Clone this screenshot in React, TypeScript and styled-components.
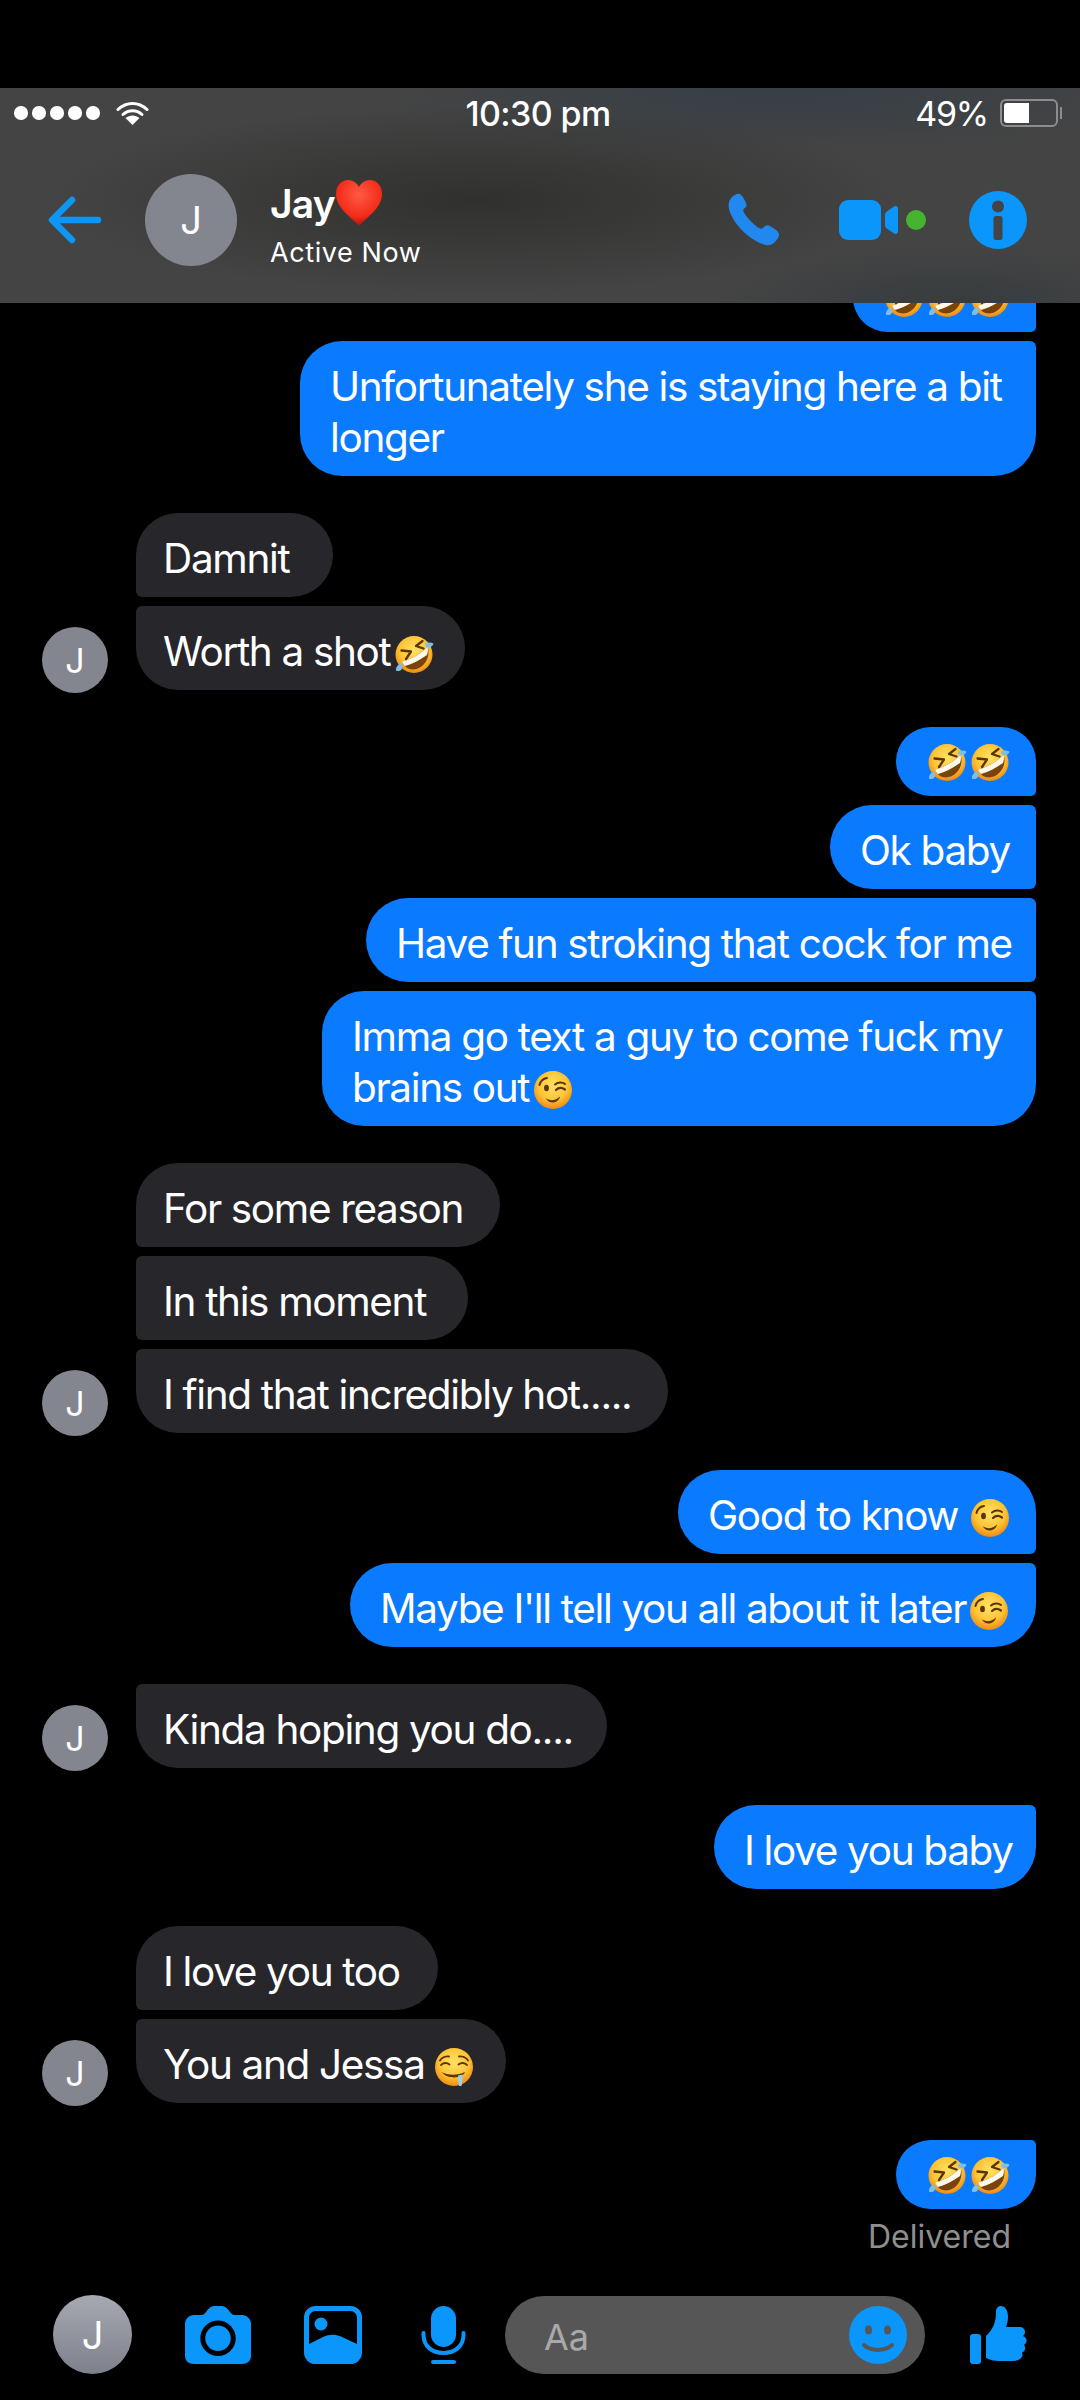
import React from "react";
import styled, {createGlobalStyle, css} from "styled-components";

const GlobalStyle = createGlobalStyle`
  html, body {
    margin: 0;
    padding: 0;
    background: #000;
  }
  body {
    font-family: Inter, "Liberation Sans", sans-serif;
    -webkit-font-smoothing: antialiased;
  }
`;

type Corner = "first" | "middle" | "last";

const Screen = styled.div`
  width: 1080px;
  height: 2400px;
  padding-top: 88px;
  box-sizing: border-box;
  display: flex;
  flex-direction: column;
  background: #000;
  color: #fff;
  overflow: hidden;
`;

const Header = styled.header`
  flex: 0 0 215px;
  display: flex;
  flex-direction: column;
  background:
    radial-gradient(ellipse 430px 95px at 44% 52%, rgba(46, 46, 44, 0.9), rgba(46, 46, 44, 0) 100%),
    radial-gradient(ellipse 420px 70px at 72% 0%, rgba(52, 62, 72, 0.85), rgba(52, 62, 72, 0) 100%),
    radial-gradient(ellipse 240px 60px at 88% 100%, rgba(52, 58, 62, 0.8), rgba(52, 58, 62, 0) 100%),
    #444;
`;

const StatusBar = styled.div`
  height: 50px;
  padding: 0 22px 0 14px;
  display: grid;
  grid-template-columns: 1fr auto 1fr;
  align-items: center;
  font-size: 34px;
  letter-spacing: -0.6px;
`;

const Signal = styled.div`
  display: flex;
  align-items: center;
  gap: 4.5px;
`;

const Dot = styled.span`
  width: 13.5px;
  height: 13.5px;
  border-radius: 50%;
  background: #fff;
`;

const WifiIcon = styled.svg`
  width: 33px;
  height: 24px;
  margin-left: 12px;
`;

const Clock = styled.div`
  font-weight: 500;
  padding-left: 4px;
`;

const Battery = styled.div`
  justify-self: end;
  display: flex;
  align-items: center;
  gap: 12px;
  font-weight: 400;
  letter-spacing: -1.2px;
`;

const BatteryShell = styled.div`
  position: relative;
  width: 58px;
  height: 28px;
  padding: 2px;
  box-sizing: border-box;
  border: 2px solid #8d8d8d;
  border-radius: 6px;
  &::after {
    content: "";
    position: absolute;
    top: 6px;
    right: -6px;
    width: 2px;
    height: 12px;
    background: #8d8d8d;
  }
`;

const BatteryFill = styled.div`
  height: 100%;
  background: #fff;
  border-radius: 3px 0 0 3px;
`;

const NavRow = styled.div`
  flex: 1;
  display: flex;
  align-items: center;
  padding: 0 53px 2px 48px;
`;

const BackIcon = styled.svg`
  width: 54px;
  height: 48px;
  margin-right: 43px;
`;

const Avatar = styled.div<{$size: number; $font: number; $shine?: boolean}>`
  flex: none;
  width: ${p => p.$size}px;
  height: ${p => p.$size}px;
  border-radius: 50%;
  display: flex;
  align-items: center;
  justify-content: center;
  background: ${p => (p.$shine ? "linear-gradient(#a6a9b2, #7e818b)" : "#83868f")};
  font-size: ${p => p.$font}px;
  font-weight: 400;
  color: #fff;
`;

const Who = styled.div`
  margin-left: 33px;
  padding-top: 8px;
  display: flex;
  flex-direction: column;
`;

const Name = styled.div`
  display: flex;
  align-items: center;
  height: 50px;
  font-size: 39px;
  font-weight: 600;
  letter-spacing: -0.8px;
`;

const Presence = styled.div`
  margin-top: 8px;
  font-size: 27px;
  letter-spacing: 0.6px;
`;

const Actions = styled.div`
  margin-left: auto;
  display: flex;
  align-items: center;
`;

const PhoneIcon = styled.svg`
  width: 53px;
  height: 53px;
  margin-right: 59px;
`;

const VideoIcon = styled.svg`
  width: 87px;
  height: 40px;
  margin-right: 43px;
`;

const InfoIcon = styled.svg`
  width: 58px;
  height: 58px;
`;

const Thread = styled.main`
  flex: 1;
  min-height: 0;
  display: flex;
  flex-direction: column;
  justify-content: flex-end;
  gap: 37px;
  padding: 0 44px 0 42px;
  overflow: hidden;
`;

const Group = styled.section`
  flex: none;
  display: flex;
  flex-direction: column;
  align-items: flex-end;
  gap: 9px;
`;

const IncomingRow = styled.section`
  flex: none;
  display: flex;
  align-items: flex-end;
  gap: 28px;
  & > div:first-child {
    margin-bottom: -3px;
  }
`;

const Stack = styled.div`
  display: flex;
  flex-direction: column;
  align-items: flex-start;
  gap: 9px;
`;

const cornerStyles = (mine: boolean, pos: Corner) => {
  const top = pos === "first" ? "42px" : "6px";
  const bottom = pos === "last" ? "42px" : "6px";
  return mine
    ? css`
        border-radius: 42px ${top} ${bottom} 42px;
      `
    : css`
        border-radius: ${top} 42px 42px ${bottom};
      `;
};

const Bubble = styled.div<{$mine?: boolean; $pos: Corner; $w: number}>`
  box-sizing: border-box;
  width: ${p => p.$w}px;
  padding: 20px 0 13px ${p => (p.$mine ? "30px" : "27px")};
  font-size: 40.5px;
  line-height: 51px;
  letter-spacing: -1.35px;
  white-space: nowrap;
  color: #fff;
  background: ${p => (p.$mine ? "#0a7aff" : "#27262b")};
  ${p => cornerStyles(!!p.$mine, p.$pos)}
`;

const EmojiBubble = styled(Bubble)`
  height: 69px;
  padding: 0 26px 0 0;
  display: flex;
  align-items: center;
  justify-content: flex-end;
  gap: 3px;
`;

const EmojiGlyph = styled.svg<{$gap?: number}>`
  width: 40px;
  height: 40px;
  vertical-align: -8px;
  margin-left: ${p => p.$gap ?? 0}px;
`;

const HeartGlyph = styled.svg`
  width: 50px;
  height: 50px;
  margin-left: -1px;
`;

const DeliveredLabel = styled.div`
  margin: -28px 25px 0 0;
  align-self: flex-end;
  font-size: 32px;
  line-height: 38px;
  color: #8f8f8f;
`;

const Composer = styled.footer`
  flex: 0 0 auto;
  display: flex;
  align-items: center;
  padding: 39px 53px 26px 53px;
`;

const CameraIcon = styled.svg`
  width: 66px;
  height: 58px;
  margin-left: 53px;
`;

const ImageIcon = styled.svg`
  width: 58px;
  height: 58px;
  margin-left: 53px;
`;

const MicIcon = styled.svg`
  width: 45px;
  height: 58px;
  margin-left: 59px;
`;

const InputPill = styled.div`
  flex: none;
  width: 420px;
  height: 78px;
  margin-left: 39px;
  padding: 0 18px 0 39px;
  box-sizing: border-box;
  display: flex;
  align-items: center;
  justify-content: space-between;
  border-radius: 39px;
  background: #565656;
  font-size: 36px;
  color: #a9a9a9;
`;

const Placeholder = styled.span`
  padding-top: 4px;
`;

const SmileIcon = styled.svg`
  width: 58px;
  height: 58px;
`;

const ThumbIcon = styled.svg`
  width: 57px;
  height: 58px;
  margin-left: auto;
`;

const FaceGradient = () => (
  <defs>
    <radialGradient id="face" cx="50%" cy="38%" r="62%">
      <stop offset="0%" stopColor="#ffe264" />
      <stop offset="62%" stopColor="#fdc436" />
      <stop offset="100%" stopColor="#ee8a12" />
    </radialGradient>
  </defs>
);

const Rofl = ({gap}: {gap?: number}) => (
  <EmojiGlyph viewBox="0 0 40 40" $gap={gap}>
    <FaceGradient />
    <circle cx="20" cy="20.5" r="18.5" fill="url(#face)" />
    <path d="M8 27.5C17 25 27 20 33.5 12.5C38 25 27 38 15.5 35C12 34 9.5 31 8 27.5Z" fill="#7a430c" />
    <path d="M8 27.5C17 25 27 20 33.5 12.5C34.3 15.5 34 18.5 33 21C26 26 18 30 11 32C9.5 30.5 8.6 29 8 27.5Z" fill="#fff8e8" />
    <path d="M28.5 7L22 12L29.5 14.5" fill="none" stroke="#5b3407" strokeWidth="2.3" strokeLinecap="round" strokeLinejoin="round" />
    <path d="M7.5 16.5L17 17.5L12 25" fill="none" stroke="#5b3407" strokeWidth="2.3" strokeLinecap="round" strokeLinejoin="round" />
    <path d="M31 9.5C33 8 37 8 39.5 9.5C39 12.5 35 14.5 32 12.5C31.3 11.8 31 10.5 31 9.5Z" fill="#7dbfe8" />
    <path d="M2 36.5C1.5 34 3.5 30.5 7 29.5C8.5 31 8.8 33.5 7.5 35.5C6 37.3 3.5 37.5 2 36.5Z" fill="#7dbfe8" />
  </EmojiGlyph>
);

const Wink = ({gap}: {gap?: number}) => (
  <EmojiGlyph viewBox="0 0 40 40" $gap={gap}>
    <FaceGradient />
    <circle cx="20" cy="20" r="19" fill="url(#face)" />
    <path d="M6.5 15C7.5 11 10.5 8.5 14 8" fill="none" stroke="#5b3407" strokeWidth="2" strokeLinecap="round" />
    <ellipse cx="13.5" cy="18" rx="2.4" ry="3.2" fill="#5b3407" />
    <path d="M22 14.5C25 12 29.5 12 32 14" fill="none" stroke="#5b3407" strokeWidth="2" strokeLinecap="round" />
    <path d="M23 20C25.5 17.5 29 17.5 32 19.5" fill="none" stroke="#5b3407" strokeWidth="2.2" strokeLinecap="round" />
    <path d="M12.5 28C17 31.5 23 30.5 27 26.5C26.5 32 17 36 12.5 28Z" fill="#5b3407" />
  </EmojiGlyph>
);

const Drool = ({gap}: {gap?: number}) => (
  <EmojiGlyph viewBox="0 0 40 40" $gap={gap}>
    <FaceGradient />
    <circle cx="20" cy="20" r="19" fill="url(#face)" />
    <path d="M6 13.5C8 10.5 12 9 15 9.5" fill="none" stroke="#5b3407" strokeWidth="1.9" strokeLinecap="round" />
    <path d="M7 18C9 15.5 13 15.5 15.5 17.5" fill="none" stroke="#5b3407" strokeWidth="1.9" strokeLinecap="round" />
    <path d="M25 9.5C28 9 32 10.5 34 13.5" fill="none" stroke="#5b3407" strokeWidth="1.9" strokeLinecap="round" />
    <path d="M24.5 17.5C27 15.5 31 15.5 33 18" fill="none" stroke="#5b3407" strokeWidth="1.9" strokeLinecap="round" />
    <path d="M7.5 25C14 28.5 24 28.5 31 25C29 31.5 14 33 7.5 25Z" fill="#5b3407" />
    <path d="M24 28.5L28.5 27.5L28 37.5C27.5 39.5 25 39.5 24.5 37.5Z" fill="#9ad0ee" />
  </EmojiGlyph>
);

const Heart = () => (
  <HeartGlyph viewBox="0 0 50 50">
    <defs>
      <radialGradient id="heart" cx="50%" cy="32%" r="70%">
        <stop offset="0%" stopColor="#ff5a45" />
        <stop offset="68%" stopColor="#f32c18" />
        <stop offset="100%" stopColor="#a90f08" />
      </radialGradient>
    </defs>
    <path d="M25 48C17 39 2 30 2 16C2 7 8 2 14 2C19 2 23 5 25 9C27 5 31 2 36 2C42 2 48 7 48 16C48 30 33 39 25 48Z" fill="url(#heart)" />
  </HeartGlyph>
);

export default function App() {
  return (
    <Screen>
      <GlobalStyle />
      <Header>
        <StatusBar>
          <Signal>
            <Dot />
            <Dot />
            <Dot />
            <Dot />
            <Dot />
            <WifiIcon viewBox="0 0 33 24">
              <path d="M2 8.5C10.5 0.5 22.5 0.5 31 8.5" fill="none" stroke="#fff" strokeWidth="3" strokeLinecap="round" />
              <path d="M7 13.5C12.5 8.5 20.5 8.5 26 13.5" fill="none" stroke="#fff" strokeWidth="3" strokeLinecap="round" />
              <path d="M16.5 24L9.5 17C13.5 13.5 19.5 13.5 23.5 17Z" fill="#fff" />
            </WifiIcon>
          </Signal>
          <Clock>10:30 pm</Clock>
          <Battery>
            49%
            <BatteryShell>
              <BatteryFill style={{width: "49%"}} />
            </BatteryShell>
          </Battery>
        </StatusBar>
        <NavRow>
          <BackIcon viewBox="0 0 54 48">
            <path d="M24 4L4 24L24 44M5 24H50" fill="none" stroke="#0d96f5" strokeWidth="6.5" strokeLinecap="round" strokeLinejoin="round" />
          </BackIcon>
          <Avatar $size={92} $font={38}>J</Avatar>
          <Who>
            <Name>
              Jay
              <Heart />
            </Name>
            <Presence>Active Now</Presence>
          </Who>
          <Actions>
            <PhoneIcon viewBox="0 0 53 53">
              <path d="M10 1C13 0 15 2 17 6L19 10C20 12 19.5 14 17 15.5C16 16.5 16 18 17.5 20.5C21 26 26 31 31 34.5C33.5 36 35.5 36 36.5 34.5C38.5 32.5 40.5 31.5 43 33L49 37C52 39 53 42 51 45C48 50 44 53 39 52C25 49 6 32 2 16C0.5 9 4 3 10 1Z" fill="#2188f0" />
            </PhoneIcon>
            <VideoIcon viewBox="0 0 87 40">
              <rect x="0" y="0" width="42" height="40" rx="9" fill="#0a96fb" />
              <path d="M46 15C46 13.5 46.5 12.5 47.5 11.7L55 6.5C57 5.5 59 6.5 59 8.5V31.5C59 33.5 57 34.5 55 33.5L47.5 28.3C46.5 27.5 46 26.5 46 25Z" fill="#0a96fb" />
              <circle cx="77" cy="20" r="10" fill="#46b42e" />
            </VideoIcon>
            <InfoIcon viewBox="0 0 58 58">
              <circle cx="29" cy="29" r="29" fill="#0a96fb" />
              <circle cx="29" cy="15.5" r="6" fill="#444" />
              <rect x="24.5" y="25" width="9" height="24" rx="2.5" fill="#444" />
            </InfoIcon>
          </Actions>
        </NavRow>
      </Header>

      <Thread>
        <Group>
          <EmojiBubble $mine $pos="first" $w={183}>
            <Rofl />
            <Rofl />
            <Rofl />
          </EmojiBubble>
          <Bubble $mine $pos="last" $w={736}>
            Unfortunately she is staying here a bit
            <br />
            longer
          </Bubble>
        </Group>

        <IncomingRow>
          <Avatar $size={66} $font={34}>J</Avatar>
          <Stack>
            <Bubble $pos="first" $w={197}>Damnit</Bubble>
            <Bubble $pos="last" $w={329}>
              Worth a shot
              <Rofl gap={4} />
            </Bubble>
          </Stack>
        </IncomingRow>

        <Group>
          <EmojiBubble $mine $pos="first" $w={140}>
            <Rofl />
            <Rofl />
          </EmojiBubble>
          <Bubble $mine $pos="middle" $w={206}>Ok baby</Bubble>
          <Bubble $mine $pos="middle" $w={670}>Have fun stroking that cock for me</Bubble>
          <Bubble $mine $pos="last" $w={714}>
            Imma go text a guy to come fuck my
            <br />
            brains out
            <Wink gap={4} />
          </Bubble>
        </Group>

        <IncomingRow>
          <Avatar $size={66} $font={34}>J</Avatar>
          <Stack>
            <Bubble $pos="first" $w={364}>For some reason</Bubble>
            <Bubble $pos="middle" $w={332}>In this moment</Bubble>
            <Bubble $pos="last" $w={532}>I find that incredibly hot.....</Bubble>
          </Stack>
        </IncomingRow>

        <Group>
          <Bubble $mine $pos="first" $w={358}>
            Good to know
            <Wink gap={12} />
          </Bubble>
          <Bubble $mine $pos="last" $w={686}>
            Maybe I'll tell you all about it later
            <Wink gap={3} />
          </Bubble>
        </Group>

        <IncomingRow>
          <Avatar $size={66} $font={34}>J</Avatar>
          <Stack>
            <Bubble $pos="last" $w={471}>Kinda hoping you do....</Bubble>
          </Stack>
        </IncomingRow>

        <Group>
          <Bubble $mine $pos="last" $w={322}>I love you baby</Bubble>
        </Group>

        <IncomingRow>
          <Avatar $size={66} $font={34}>J</Avatar>
          <Stack>
            <Bubble $pos="first" $w={302}>I love you too</Bubble>
            <Bubble $pos="last" $w={370}>
              You and Jessa
              <Drool gap={9} />
            </Bubble>
          </Stack>
        </IncomingRow>

        <Group>
          <EmojiBubble $mine $pos="last" $w={140}>
            <Rofl />
            <Rofl />
          </EmojiBubble>
        </Group>
        <DeliveredLabel>Delivered</DeliveredLabel>
      </Thread>

      <Composer>
        <Avatar $size={79} $font={38} $shine>J</Avatar>
        <CameraIcon viewBox="0 0 66 58">
          <path fillRule="evenodd" d="M9 9H16C18.5 9 19.5 8 21 6C23.5 2.5 26 0 29 0H37C40 0 42.5 2.5 45 6C46.5 8 47.5 9 50 9H57C62 9 66 13 66 18V50C66 55 62 58 57 58H9C4 58 0 55 0 50V18C0 13 4 9 9 9ZM33 14.5A17.5 17.5 0 1 0 33 50A17.5 17.5 0 1 0 33 14.5ZM33 19.5A12.5 12.5 0 1 1 33 45A12.5 12.5 0 1 1 33 19.5Z" fill="#0a96fb" />
        </CameraIcon>
        <ImageIcon viewBox="0 0 58 58">
          <rect x="2.5" y="2.5" width="53" height="53" rx="9" fill="none" stroke="#0a96fb" strokeWidth="5" />
          <path d="M3 39L19 31C25 28 31 28 37 30.5L55 39V50C55 53 53 55 50 55H8C5 55 3 53 3 50Z" fill="#0a96fb" />
          <circle cx="17" cy="18" r="6.5" fill="#0a96fb" />
        </ImageIcon>
        <MicIcon viewBox="0 0 45 58">
          <rect x="10" y="0" width="25" height="41" rx="12.5" fill="#0a96fb" />
          <path d="M2.5 27V29C2.5 40 11 47 22.5 47C34 47 42.5 40 42.5 29V27" fill="none" stroke="#0a96fb" strokeWidth="4" strokeLinecap="round" />
          <rect x="10" y="54" width="25" height="4" rx="2" fill="#0a96fb" />
        </MicIcon>
        <InputPill>
          <Placeholder>Aa</Placeholder>
          <SmileIcon viewBox="0 0 58 58">
            <circle cx="29" cy="29" r="29" fill="#0a96fb" />
            <ellipse cx="19.5" cy="24" rx="3.5" ry="4.5" fill="#565656" />
            <ellipse cx="38.5" cy="24" rx="3.5" ry="4.5" fill="#565656" />
            <path d="M15 39C22 45.5 36 45.5 43 39" fill="none" stroke="#565656" strokeWidth="4" strokeLinecap="round" />
          </SmileIcon>
        </InputPill>
        <ThumbIcon viewBox="0 0 57 58">
          <rect x="0" y="28" width="11" height="30" rx="3" fill="#0a96fb" />
          <path d="M16 30C22 24 26 18 26 6C26 2 28 0 31 0C35 0 38 4 38 11C38 15 37 18 36 21H49C53 21 55 23 55 26C55 28 54 29 53 30C55.5 31 57 33 56.5 35.5C56 37 55.5 38 54 39C55.5 40.5 55.5 43 54.5 44.5C54 45.5 53 46 52 46.5C53 48 52.5 50.5 51 52C49 54 46 55 43 55H29C24 55 20 54 16 52Z" fill="#0a96fb" />
        </ThumbIcon>
      </Composer>
    </Screen>
  );
}
